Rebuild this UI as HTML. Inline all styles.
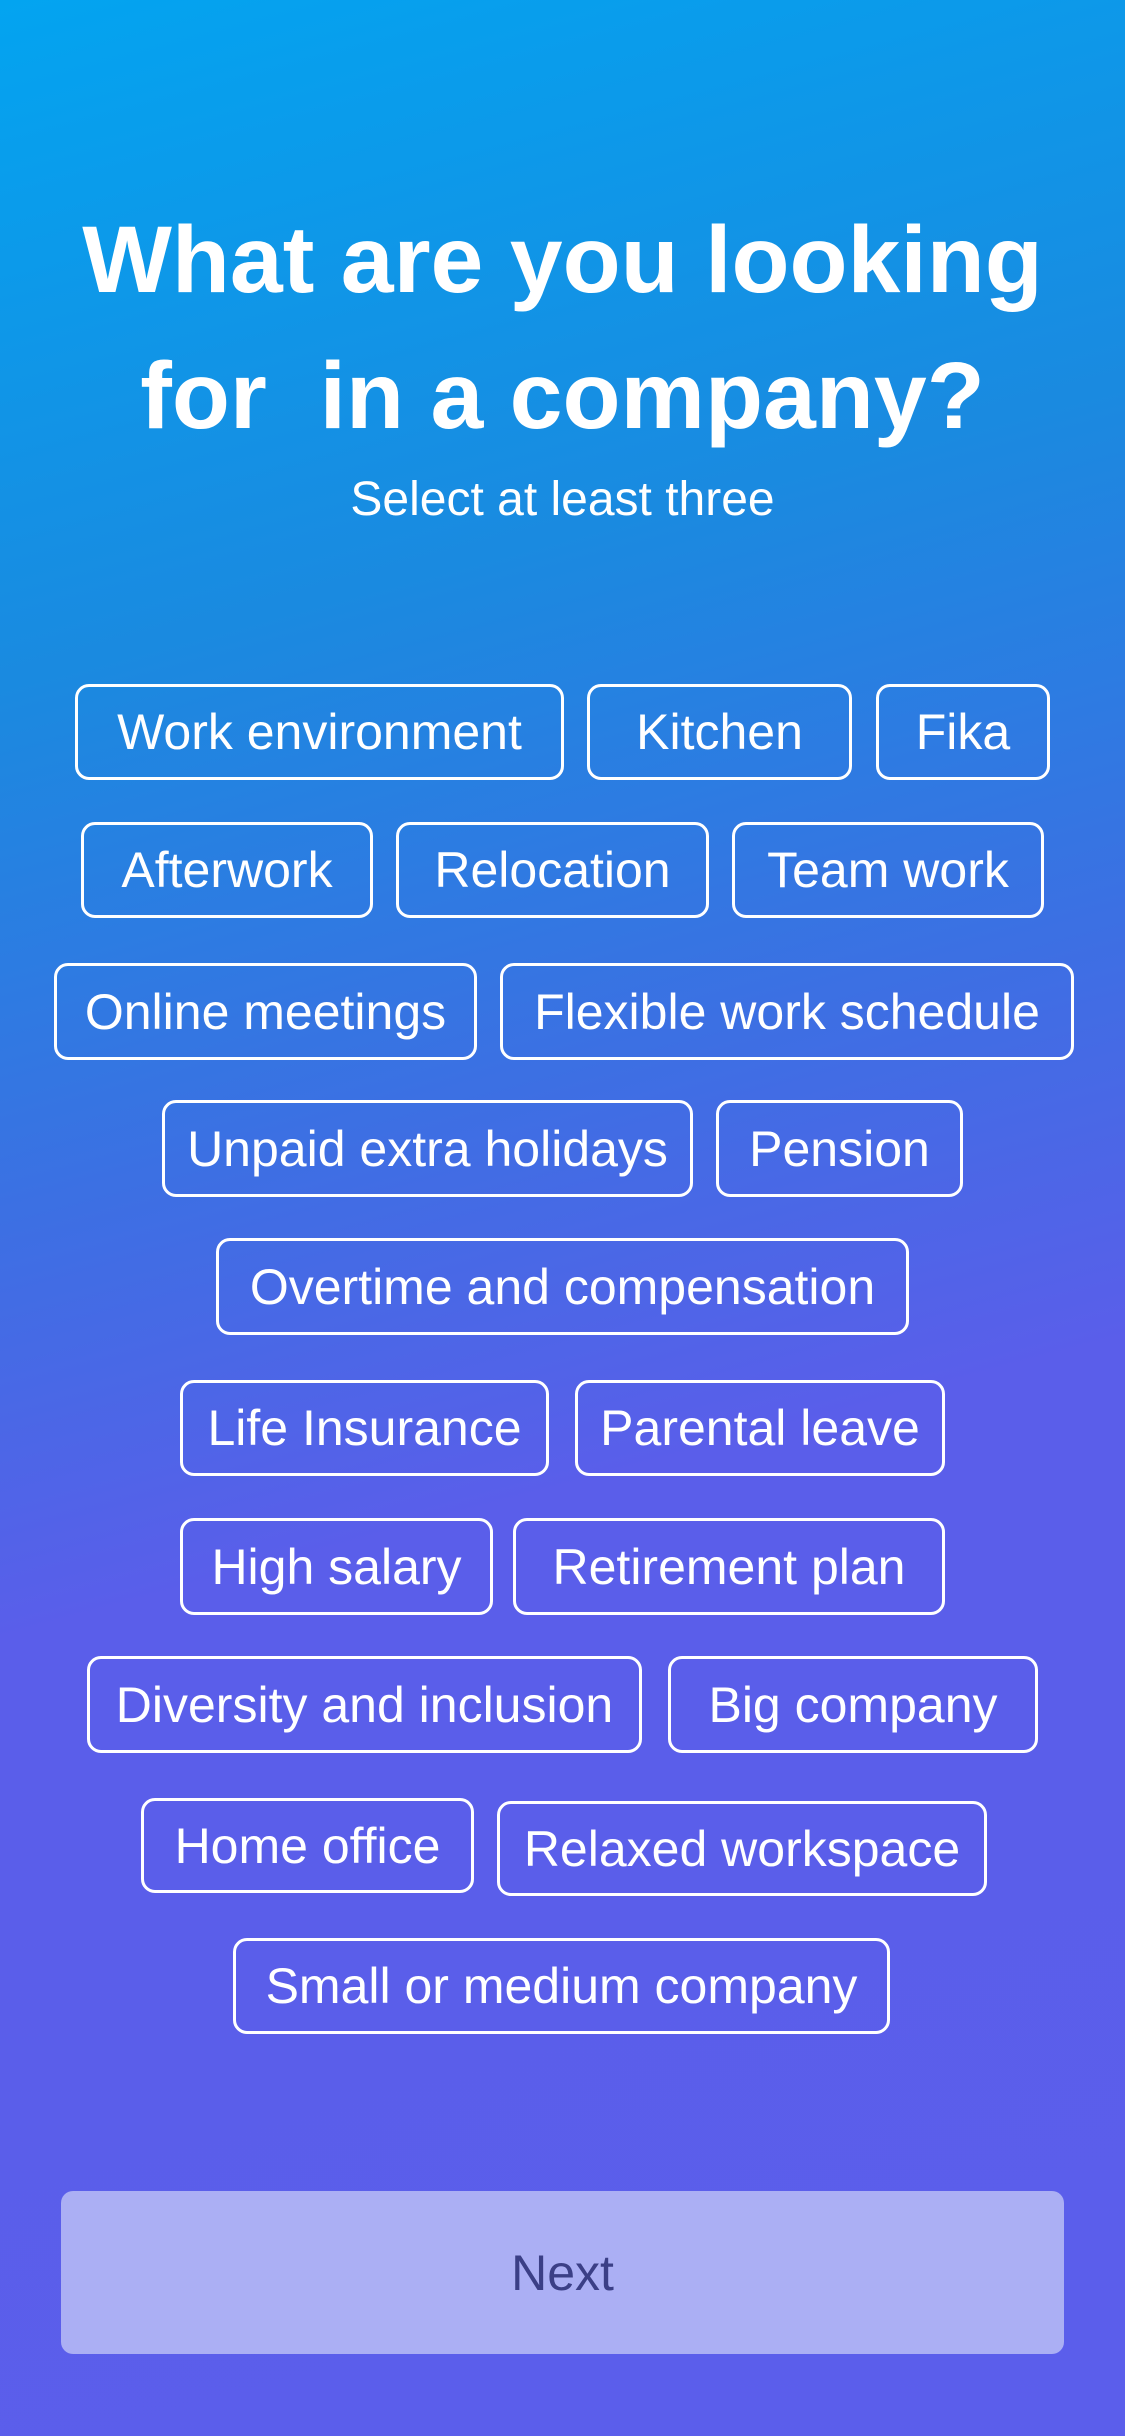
<!DOCTYPE html>
<html><head><meta charset="utf-8"><style>
html,body{margin:0;padding:0}
body{width:1125px;height:2436px;position:relative;overflow:hidden;
background:linear-gradient(165deg,#03a4f0 0%,#1a8ae0 25%,#3d6fe3 45%,#5a5eea 60%,#5b5eeb 100%);
font-family:"Liberation Sans",sans-serif;color:#fff}
.t{position:absolute;left:0;width:1125px;text-align:center;font-weight:bold;font-size:95px;line-height:1;white-space:nowrap}
.s{position:absolute;left:0;width:1125px;text-align:center;font-size:48px;line-height:1}
.c{position:absolute;box-sizing:border-box;border:3px solid #fff;border-radius:14px;display:flex;align-items:center;justify-content:center;font-size:50px;white-space:nowrap}
.n{position:absolute;left:61px;top:2191px;width:1003px;height:163px;background:#abaff4;border-radius:12px;display:flex;align-items:center;justify-content:center;color:#3b3f86;font-size:50px}
</style></head><body>
<div class="t" style="top:213px">What are you looking</div>
<div class="t" style="top:349px">for&nbsp; in a company?</div>
<div class="s" style="top:476px">Select at least three</div>

<div class="c" style="left:75px;top:684px;width:489px;height:96px">Work environment</div>
<div class="c" style="left:587px;top:684px;width:265px;height:96px">Kitchen</div>
<div class="c" style="left:876px;top:684px;width:174px;height:96px">Fika</div>

<div class="c" style="left:81px;top:822px;width:292px;height:96px">Afterwork</div>
<div class="c" style="left:396px;top:822px;width:313px;height:96px">Relocation</div>
<div class="c" style="left:732px;top:822px;width:312px;height:96px">Team work</div>

<div class="c" style="left:54px;top:963px;width:423px;height:97px">Online meetings</div>
<div class="c" style="left:500px;top:963px;width:574px;height:97px">Flexible work schedule</div>

<div class="c" style="left:162px;top:1100px;width:531px;height:97px">Unpaid extra holidays</div>
<div class="c" style="left:716px;top:1100px;width:247px;height:97px">Pension</div>

<div class="c" style="left:216px;top:1238px;width:693px;height:97px">Overtime and compensation</div>

<div class="c" style="left:180px;top:1380px;width:369px;height:96px">Life Insurance</div>
<div class="c" style="left:575px;top:1380px;width:370px;height:96px">Parental leave</div>

<div class="c" style="left:180px;top:1518px;width:313px;height:97px">High salary</div>
<div class="c" style="left:513px;top:1518px;width:432px;height:97px">Retirement plan</div>

<div class="c" style="left:87px;top:1656px;width:555px;height:97px">Diversity and inclusion</div>
<div class="c" style="left:668px;top:1656px;width:370px;height:97px">Big company</div>

<div class="c" style="left:141px;top:1798px;width:333px;height:95px">Home office</div>
<div class="c" style="left:497px;top:1801px;width:490px;height:95px">Relaxed workspace</div>

<div class="c" style="left:233px;top:1938px;width:657px;height:96px">Small or medium company</div>

<div class="n">Next</div>
</body></html>
